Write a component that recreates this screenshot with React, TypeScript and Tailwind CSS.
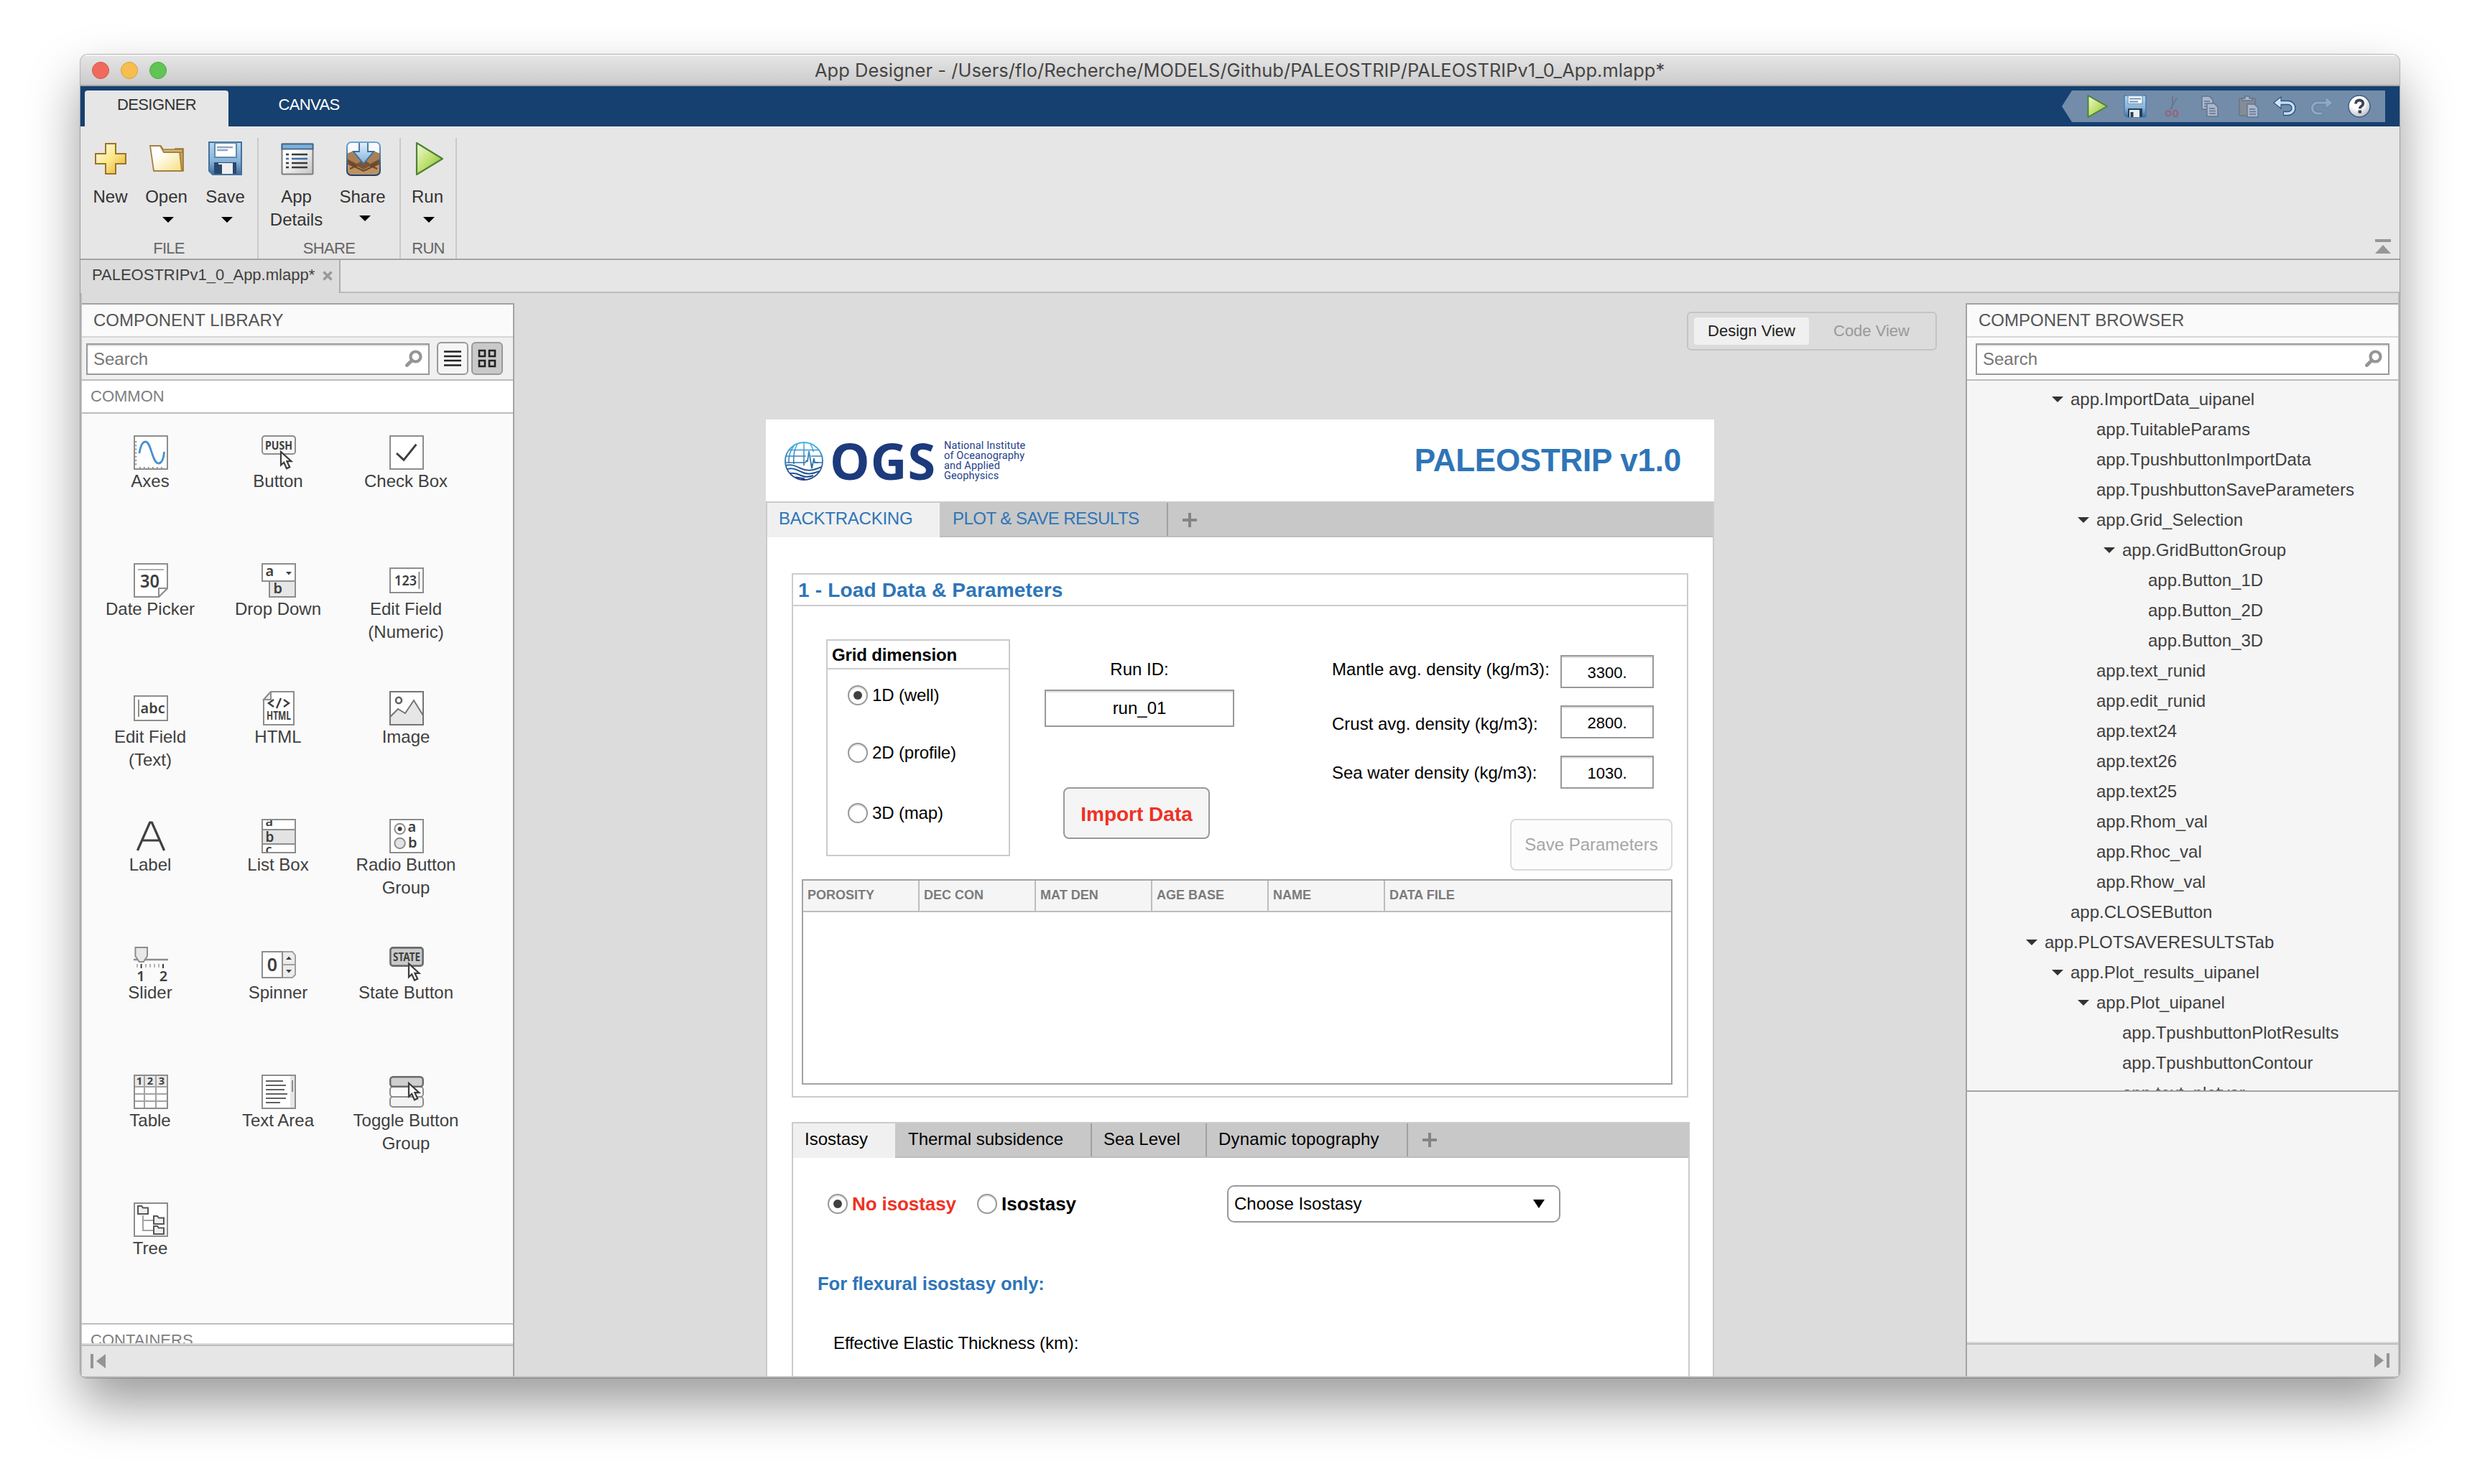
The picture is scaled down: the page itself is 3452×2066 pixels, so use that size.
import React from "react";

type IconProps = { className?: string };

/* ---------- toolstrip icons ---------- */

function Gradients() {
  return (
    <svg className="absolute h-0 w-0" aria-hidden="true">
      <defs>
        <linearGradient id="gold" x1="0" y1="0" x2="1" y2="1">
          <stop offset="0" stopColor="#fffdf0" />
          <stop offset="0.5" stopColor="#fbe88a" />
          <stop offset="1" stopColor="#e5a92c" />
        </linearGradient>
        <linearGradient id="paper" x1="0" y1="0" x2="1" y2="1">
          <stop offset="0.3" stopColor="#ffffff" />
          <stop offset="1" stopColor="#f6e07f" />
        </linearGradient>
        <linearGradient id="steel" x1="0" y1="0" x2="0" y2="1">
          <stop offset="0" stopColor="#b4d9f0" />
          <stop offset="0.6" stopColor="#86b1d6" />
          <stop offset="1" stopColor="#3f6a97" />
        </linearGradient>
        <linearGradient id="go" x1="0" y1="0" x2="1" y2="1">
          <stop offset="0" stopColor="#f2f9e0" />
          <stop offset="0.5" stopColor="#c0e070" />
          <stop offset="1" stopColor="#7fb53a" />
        </linearGradient>
        <linearGradient id="sheet" x1="0" y1="0" x2="1" y2="1">
          <stop offset="0.3" stopColor="#ffffff" />
          <stop offset="1" stopColor="#c4c4c4" />
        </linearGradient>
        <linearGradient id="ice" x1="0" y1="0" x2="0" y2="1">
          <stop offset="0" stopColor="#e4f2fb" />
          <stop offset="1" stopColor="#7fb0d8" />
        </linearGradient>
        <linearGradient id="frame" x1="0" y1="0" x2="0" y2="1">
          <stop offset="0" stopColor="#6aa5d3" />
          <stop offset="1" stopColor="#1f3f66" />
        </linearGradient>
        <linearGradient id="sea" x1="0" y1="0" x2="0" y2="54" gradientUnits="userSpaceOnUse">
          <stop offset="0" stopColor="#45b5e6" />
          <stop offset="1" stopColor="#1c3a7c" />
        </linearGradient>
        <radialGradient id="ball" cx="0.4" cy="0.3" r="0.8">
          <stop offset="0.4" stopColor="#ffffff" />
          <stop offset="1" stopColor="#a8b0b8" />
        </radialGradient>
      </defs>
    </svg>
  );
}

const NewIcon = () => (
  <svg viewBox="0 0 48 48" className="size-12">
    <path d="M17 3h14v14h14v14H31v14H17V31H3V17h14z" fill="url(#gold)" stroke="#9c7426" strokeWidth="2" />
  </svg>
);

const OpenIcon = () => (
  <svg viewBox="0 0 48 48" className="size-12">
    <path d="M36 10h11v31H42z" fill="#c9a25c" stroke="#94702f" strokeWidth="1.6" />
    <path d="M1 6h15l3 5h27v4H20z" fill="#d8b777" stroke="#a07c3a" strokeWidth="1.6" />
    <path d="M1 6h14l5 9h22l3 26H6z" fill="url(#paper)" stroke="#a6803f" strokeWidth="1.8" />
  </svg>
);

const SaveIcon = ({ className = "size-12" }: IconProps) => (
  <svg viewBox="0 0 48 48" className={className}>
    <path d="M1 1h45v45H6l-5-5z" fill="url(#steel)" stroke="#44709c" strokeWidth="2" />
    <path d="M9 2h30v20H9z" fill="#ffffff" stroke="#5f88b0" strokeWidth="2" />
    <path d="M12 8h22M12 12h15" stroke="#8fa6c6" strokeWidth="2.4" />
    <path d="M8 29h31v16H8z" fill="#28486f" />
    <path d="M14 30h20v15H14z" fill="#efefef" />
    <path d="M14 32h5v13h-5z" fill="#28486f" />
  </svg>
);

const DetailsIcon = () => (
  <svg viewBox="0 0 48 48" className="size-12 translate-x-px">
    <rect x="2.5" y="3.5" width="43" height="42" rx="1" fill="url(#sheet)" stroke="#7d7d7d" strokeWidth="2" />
    <rect x="2.5" y="3.5" width="43" height="7" fill="#7fb0d8" stroke="#3d648c" strokeWidth="1.8" />
    <path d="M16 18h22M16 30h22M16 36h22" stroke="#3a3a3a" strokeWidth="2.4" />
    <path d="M16 24h22" stroke="#3d6ea5" strokeWidth="2.4" />
    <path d="M8 18h4M8 30h4M8 36h4" stroke="#3a3a3a" strokeWidth="2.6" />
    <path d="M8 24h4" stroke="#3d6ea5" strokeWidth="2.6" />
  </svg>
);

const ShareIcon = () => (
  <svg viewBox="0 0 48 48" className="size-12 translate-x-px">
    <rect x="1" y="1" width="46" height="46" rx="6" fill="#f8fafc" />
    <path d="M1 17l10-4h26l10 4v24a6 6 0 0 1-6 6H7a6 6 0 0 1-6-6z" fill="#7b5534" />
    <path d="M1 17l10-4 13 12-9 6L1 24zM47 17l-10-4-13 12 9 6 14-7z" fill="#a97f55" />
    <path d="M1 27l23 12 23-12v14a6 6 0 0 1-6 6H7a6 6 0 0 1-6-6z" fill="#bd9263" />
    <path d="M1 27l13 7-9 4M47 27l-13 7 9 4M1 30l23 11 23-11" fill="none" stroke="#6a4627" strokeWidth="2" />
    <path d="M18 1h12v13h8L24 31 10 14h8z" fill="url(#ice)" stroke="#3a6ea3" strokeWidth="1.8" />
    <rect x="1" y="1" width="46" height="46" rx="6" fill="none" stroke="url(#frame)" strokeWidth="2" />
  </svg>
);

const RunIcon = ({ className = "size-12" }: IconProps) => (
  <svg viewBox="0 0 48 48" className={className}>
    <path d="M7 2v44L43 24z" fill="url(#go)" stroke="#4b8433" strokeWidth="2.2" strokeLinejoin="round" />
  </svg>
);

/* ---------- quick access icons (32px) ---------- */

const QuickRunIcon = () => (
  <svg viewBox="0 0 32 32" className="size-8">
    <path d="M2.500 1v30L29 16z" fill="url(#go)" stroke="#4b8433" strokeWidth="2" strokeLinejoin="round" />
  </svg>
);

const QuickSaveIcon = () => (
  <svg viewBox="0 0 32 32" className="size-8">
    <path d="M1 1h30v30H4l-3-3z" fill="url(#steel)" stroke="#4a7db0" strokeWidth="1.600" />
    <path d="M6 1.500h20v11H6z" fill="#fff" stroke="#7fa3c4" strokeWidth="1.500" />
    <path d="M8 5.500h16M8 9.500h12" stroke="#6f93b8" strokeWidth="2" />
    <path d="M6 19h20v12H6z" fill="#22405f" />
    <path d="M8 21h14v10H8z" fill="#ececec" />
    <path d="M9.500 24h4v7h-4z" fill="#22405f" />
  </svg>
);

const CutIcon = () => (
  <svg viewBox="0 0 32 32" className="size-8" fill="none">
    <path d="M16 2v10l-1 8M22 4L13 20" stroke="#68778f" strokeWidth="1.8" />
    <ellipse cx="10" cy="26" rx="3.300" ry="3.600" stroke="#95647e" strokeWidth="2.4" />
    <ellipse cx="20" cy="26" rx="3" ry="4.4" stroke="#95647e" strokeWidth="2.4" />
  </svg>
);

const Sheet = ({ x, y }: { x: number; y: number }) => (
  <g transform={`translate(${x} ${y})`}>
    <path d="M0 0h10l5 5v13H0z" fill="#a9b7cb" stroke="#63738d" strokeWidth="1.4" />
    <path d="M3 7h8M3 10.500h9M3 14h9" stroke="#63738d" strokeWidth="1.5" />
  </g>
);

const CopyIcon = () => (
  <svg viewBox="0 0 32 32" className="size-8">
    <Sheet x={5} y={2} />
    <Sheet x={12} y={12} />
  </svg>
);

const PasteIcon = () => (
  <svg viewBox="0 0 32 32" className="size-8">
    <rect x="5" y="5" width="22" height="24" rx="1.500" fill="#858c96" stroke="#6b7484" strokeWidth="1.500" />
    <path d="M9 8V5h4V2h6v3h4v3z" fill="#a9b7cb" stroke="#63738d" strokeWidth="1.4" />
    <Sheet x={16} y={13} />
  </svg>
);

const UndoIcon = () => (
  <svg viewBox="0 0 32 32" className="size-8" fill="none">
    <path d="M7 11h14a7 7 0 0 1 0 15h-7" stroke="#2c5484" strokeWidth="6.400" />
    <path d="M1 11l10-8v16z" fill="#d6ebf9" stroke="#2c5484" strokeWidth="1.200" />
    <path d="M7 11h14a7 7 0 0 1 0 15h-6" stroke="#c5e0f3" strokeWidth="3.600" />
  </svg>
);

const RedoIcon = () => (
  <svg viewBox="0 0 32 32" className="size-8" fill="none">
    <path d="M24 11H10a7 7 0 0 0 0 15h7" stroke="#6683a6" strokeWidth="6" />
    <path d="M31 11L21 3v16z" fill="#8fa9c4" stroke="#6683a6" strokeWidth="1" />
    <path d="M24 11H10a7 7 0 0 0 0 15h6" stroke="#8fa9c4" strokeWidth="3.200" />
  </svg>
);

const HelpIcon = () => (
  <svg viewBox="0 0 32 32" className="size-8">
    <circle cx="16" cy="16" r="15" fill="url(#ball)" stroke="#3d5a80" strokeWidth="1.400" />
    <path
      d="M11 12.500c0-3.300 2.200-5 5.200-5s5.100 1.700 5.100 4.400c0 4-4.500 3.600-4.500 7.400"
      fill="none"
      stroke="#3b4252"
      strokeWidth="3.800"
    />
    <rect x="14.600" y="21.500" width="4.400" height="4.200" fill="#3b4252" />
  </svg>
);

const Caret = ({ className = "" }: IconProps) => (
  <svg viewBox="0 0 16 8" className={`h-2 w-4 ${className}`}>
    <path d="M0 0h16L8 8z" fill="currentColor" />
  </svg>
);

const SearchIcon = () => (
  <svg viewBox="0 0 24 24" className="size-6">
    <circle cx="14.500" cy="9.500" r="7" fill="none" stroke="#959595" strokeWidth="4.200" />
    <path d="M9 15L2.500 21.500" stroke="#959595" strokeWidth="4.800" strokeLinecap="round" />
  </svg>
);

const PlusIcon = () => (
  <svg viewBox="0 0 20 20" className="size-5">
    <path d="M0 10h20M10 0v20" stroke="#858585" strokeWidth="4" />
  </svg>
);

const Cursor = ({ x, y }: { x: number; y: number }) => (
  <path
    transform={`translate(${x} ${y})`}
    d="M0 0v9.300l2.100-1.900 1.900 4.200 2.100-1-1.900-4h3z"
    fill="#fff"
    stroke="#3c3c3c"
    strokeWidth="1.100"
  />
);

/* ---------- component library icons on a 24 unit grid ---------- */

const Tile = ({ children }: { children: React.ReactNode }) => (
  <svg
    viewBox="0 0 24 24"
    className="size-12 overflow-hidden"
    fill="none"
    fontFamily="Noto Sans, Open Sans, sans-serif"
    fontWeight="600"
  >
    {children}
  </svg>
);

const G = "#8d8d8d";
const D = "#3f3f3f";
const Box = () => <rect x="0.5" y="0.5" width="23" height="23" fill="#fff" stroke={G} />;

const AxesIcon = () => (
  <Tile>
    <Box />
    <path d="M1.600 4v17" stroke={G} strokeDasharray="1 1.600" />
    <path d="M4 22.500h17" stroke={G} strokeDasharray="0.8 2.200" />
    <path d="M4 12.500C5 6 6.500 4.500 8.300 4.500c4 0 4.500 15 9 15 2.200 0 3.500-3 4-8" stroke="#4a90cf" strokeWidth="1.400" />
  </Tile>
);
const ButtonIcon = () => (
  <Tile>
    <rect x="0.5" y="0.5" width="23" height="12.500" rx="1.800" fill="#f7f7f7" stroke={G} />
    <text x="12" y="9.800" fontSize="7.600" textAnchor="middle" fill={D} fontWeight="700" textLength="19" lengthAdjust="spacingAndGlyphs">PUSH</text>
    <Cursor x={13.500} y={11.500} />
  </Tile>
);
const CheckIcon = () => (
  <Tile>
    <Box />
    <path d="M5 12.500l5 4.700L18.700 6.300" stroke={D} strokeWidth="1.500" />
  </Tile>
);
const DateIcon = () => (
  <Tile>
    <path d="M0.500 0.500h23V17.500l-6 6H0.500z" fill="#fff" stroke={G} />
    <path d="M3 4.500h18" stroke="#b0b0b0" />
    <text x="11.200" y="17" fontSize="12.500" textAnchor="middle" fill={D} textLength="13.500" lengthAdjust="spacingAndGlyphs">30</text>
    <path d="M17.500 23.500v-6h6z" fill="#fff" stroke={G} />
  </Tile>
);
const DropIcon = () => (
  <Tile>
    <rect x="5.500" y="12.500" width="18" height="11" fill="#e6e6e6" stroke={G} />
    <rect x="0.500" y="0.500" width="23" height="12" fill="#fff" stroke={G} />
    <text x="2.800" y="9" fontSize="10" fill={D}>a</text>
    <text x="8.300" y="21" fontSize="10" fill={D}>b</text>
    <path d="M17 6h4l-2 2.200z" fill={D} />
  </Tile>
);
const NumericIcon = () => (
  <Tile>
    <rect x="0.500" y="3.500" width="23" height="17" fill="#fff" stroke={G} />
    <text x="11.300" y="15.500" fontSize="10" textAnchor="middle" fill={D} textLength="15.500" lengthAdjust="spacingAndGlyphs">123</text>
    <path d="M20.700 6v12" stroke={G} />
  </Tile>
);
const TextFieldIcon = () => (
  <Tile>
    <rect x="0.500" y="3.500" width="23" height="17" fill="#fff" stroke={G} />
    <text x="13.300" y="15.300" fontSize="10" textAnchor="middle" fill={D} textLength="17" lengthAdjust="spacingAndGlyphs">abc</text>
    <path d="M3.500 6v12" stroke={G} />
  </Tile>
);
const HtmlIcon = () => (
  <Tile>
    <path d="M6.500 0.500h16v23h-21V6z" fill="#fff" stroke={G} />
    <path d="M6.500 0.500V6h-5z" fill="#eee" stroke={G} />
    <path d="M8.500 6L5 8.500 8.500 11M15.500 6L19 8.500 15.500 11M13.500 5l-3 7" stroke={D} strokeWidth="1.200" />
    <text x="12" y="20.200" fontSize="7.600" textAnchor="middle" fill={D} fontWeight="700" textLength="17" lengthAdjust="spacingAndGlyphs">HTML</text>
  </Tile>
);
const ImageIcon = () => (
  <Tile>
    <Box />
    <path d="M0.500 18L6 12.500 11 15.500 17 6.500l6.500 10.500v6.500H0.500z" fill="#e6e6e6" stroke="#747474" />
    <ellipse cx="6.500" cy="6.500" rx="2" ry="2.100" stroke="#606060" strokeWidth="1.300" />
    <rect x="0.500" y="0.500" width="23" height="23" stroke="#747474" />
  </Tile>
);
const LabelIcon = () => (
  <Tile>
    <path d="M2.700 22L11.300 2.500h1.400L21.300 22M6 15h12" stroke={D} strokeWidth="1.600" />
  </Tile>
);
const ListIcon = () => (
  <Tile>
    <Box />
    <text x="2.800" y="5.200" fontSize="9" fill={D}>a</text>
    <text x="2.800" y="24.500" fontSize="9" fill={D}>c</text>
    <rect x="0.500" y="7.500" width="23" height="10" fill="#e3e3e3" stroke={G} />
    <text x="2.700" y="15.900" fontSize="9.500" fill={D}>b</text>
    <rect x="0.500" y="0.500" width="23" height="23" stroke={G} />
  </Tile>
);
const RadioIcon = () => (
  <Tile>
    <Box />
    <circle cx="7.300" cy="7" r="3.600" fill="#fff" stroke={G} />
    <circle cx="7.300" cy="7" r="1.500" fill={D} />
    <circle cx="7.300" cy="17" r="3.600" fill="#e3e3e3" stroke={G} />
    <text x="12.800" y="9.200" fontSize="10" fill={D}>a</text>
    <text x="13" y="20" fontSize="10" fill={D}>b</text>
  </Tile>
);
const SliderIcon = () => (
  <Tile>
    <path d="M0 9h24" stroke={G} strokeWidth="1.300" />
    <path d="M1.200 0.500h8.300v6l-2.600 4h-3l-2.700-4z" fill="#e8e8e8" stroke={G} />
    <path d="M2.500 12v2.400M8.500 12v2.400M11.500 12v2.400M14.500 12v2.400M17.500 12v2.400" stroke="#a0a0a0" strokeWidth="0.800" />
    <path d="M5.300 12v3M20.500 12v3" stroke={D} />
    <text x="5" y="24" fontSize="10" textAnchor="middle" fill={D}>1</text>
    <text x="20.800" y="24" fontSize="10" textAnchor="middle" fill={D}>2</text>
  </Tile>
);
const SpinnerIcon = () => (
  <Tile>
    <path d="M14.500 3.500h7l2 2.500v13.500l-2 2h-7z" fill="#ececec" stroke="#a0a0a0" />
    <path d="M0.500 3.500h14v18h-14z" fill="#fff" stroke={G} />
    <path d="M14.500 12.500h9" stroke="#a0a0a0" />
    <text x="7.500" y="17" fontSize="12.500" textAnchor="middle" fill={D}>0</text>
    <path d="M17 9h4l-2-2.200zM17 16h4l-2 2.200z" fill={D} />
  </Tile>
);
const StateIcon = () => (
  <Tile>
    <rect x="0.700" y="0.700" width="22.600" height="12.600" rx="1.800" fill="#cacaca" stroke="#6a6a6a" strokeWidth="1.300" />
    <text x="12" y="10" fontSize="7.600" textAnchor="middle" fill={D} fontWeight="700" textLength="19" lengthAdjust="spacingAndGlyphs">STATE</text>
    <Cursor x={13.500} y={11.800} />
  </Tile>
);
const TableIcon = () => (
  <Tile>
    <Box />
    <rect x="1" y="1" width="22" height="7.500" fill="#e8e8e8" />
    <path d="M0.500 8.500h23M0.500 13.500h23M0.500 18.500h23M7.500 0.500v23M15.500 0.500v23" stroke="#a3a3a3" />
    <rect x="0.500" y="0.500" width="23" height="23" stroke={G} />
    <text x="4" y="7" fontSize="7.300" fontWeight="700" textAnchor="middle" fill={D}>1</text>
    <text x="11.500" y="7" fontSize="7.300" fontWeight="700" textAnchor="middle" fill={D}>2</text>
    <text x="19.500" y="7" fontSize="7.300" fontWeight="700" textAnchor="middle" fill={D}>3</text>
  </Tile>
);
const AreaIcon = () => (
  <Tile>
    <Box />
    <rect x="20" y="1" width="3" height="22" fill="#e6e6e6" />
    <path d="M21.500 4v8" stroke={G} />
    <path d="M3 4.500h12M3 7.500h14M3 10.500h13M3 13.500h15M3 16.500h14M3 19.500h10" stroke="#606060" />
  </Tile>
);
const ToggleIcon = () => (
  <Tile>
    <rect x="0.500" y="8.500" width="23" height="7" rx="2" fill="#fafafa" stroke={G} />
    <rect x="0.500" y="15.500" width="23" height="7" rx="2" fill="#f2f2f2" stroke={G} />
    <rect x="0.600" y="1.600" width="22.800" height="6.800" rx="2" fill="#cfcfcf" stroke="#6a6a6a" strokeWidth="1.200" />
    <Cursor x={13.500} y={6} />
  </Tile>
);
const Folder = ({ x, y }: { x: number; y: number }) => (
  <path transform={`translate(${x} ${y})`} d="M0 0h2.500l1 1.200H7V5.500H0z" fill="#eee" stroke="#555" />
);
const TreeIcon = () => (
  <Tile>
    <Box />
    <path d="M6.500 9v10.500h7M6.500 12.500h7" stroke="#a3a3a3" />
    <Folder x={3} y={2.500} />
    <Folder x={14} y={9.500} />
    <Folder x={14} y={16.500} />
  </Tile>
);

const library: { label: string; Icon: () => React.ReactElement }[] = [
  { label: "Axes", Icon: AxesIcon },
  { label: "Button", Icon: ButtonIcon },
  { label: "Check Box", Icon: CheckIcon },
  { label: "Date Picker", Icon: DateIcon },
  { label: "Drop Down", Icon: DropIcon },
  { label: "Edit Field (Numeric)", Icon: NumericIcon },
  { label: "Edit Field (Text)", Icon: TextFieldIcon },
  { label: "HTML", Icon: HtmlIcon },
  { label: "Image", Icon: ImageIcon },
  { label: "Label", Icon: LabelIcon },
  { label: "List Box", Icon: ListIcon },
  { label: "Radio Button Group", Icon: RadioIcon },
  { label: "Slider", Icon: SliderIcon },
  { label: "Spinner", Icon: SpinnerIcon },
  { label: "State Button", Icon: StateIcon },
  { label: "Table", Icon: TableIcon },
  { label: "Text Area", Icon: AreaIcon },
  { label: "Toggle Button Group", Icon: ToggleIcon },
  { label: "Tree", Icon: TreeIcon },
];

/* ---------- window chrome ---------- */

function TitleBar() {
  return (
    <div className="flex h-11 shrink-0 items-center border-b-2 border-[#a9a9a9] bg-linear-to-b from-[#e6e6e6] to-[#cbcbcb] shadow-[inset_0_2px_0_#f3f3f3]">
      <div className="ml-4 mt-0.5 flex gap-4">
        <span className="size-6 rounded-full border border-[#d9564c] bg-[#ee6a5f]" />
        <span className="size-6 rounded-full border border-[#dca13a] bg-[#f5be4f]" />
        <span className="size-6 rounded-full border border-[#4fa73f] bg-[#61c455]" />
      </div>
      <div className="ml-[902px] w-[1190px] whitespace-nowrap pt-[3px] font-['Inter'] text-[25.4px] tracking-[0.060px] text-[#444]">
        App Designer - /Users/flo/Recherche/MODELS/Github/PALEOSTRIP/PALEOSTRIPv1_0_App.mlapp*
      </div>
    </div>
  );
}

function RibbonTabs() {
  return (
    <div className="flex h-14 shrink-0 items-start bg-[#164070] pt-1.5 text-[22px] tracking-[-0.600px]">
      <div className="ml-1.5 flex h-[50px] w-[200px] justify-center rounded-t bg-[#e6e6e6] pt-1 leading-8 text-[#333]">
        DESIGNER
      </div>
      <div className="flex w-[224px] justify-center pt-1 leading-8 text-white">CANVAS</div>
      <div className="ml-auto mr-5 flex">
        <svg viewBox="0 0 14 44" className="h-11 w-3.5">
          <path d="M14 0v44L0 22z" fill="#738ca9" />
        </svg>
        <div className="flex h-11 w-[436px] items-center gap-5 bg-[#738ca9] pl-5">
          <QuickRunIcon />
          <QuickSaveIcon />
          <CutIcon />
          <CopyIcon />
          <PasteIcon />
          <UndoIcon />
          <RedoIcon />
          <HelpIcon />
        </div>
      </div>
    </div>
  );
}

function Tool({ width, icon, lines, caret }: { width: string; icon: React.ReactNode; lines: string[]; caret?: string }) {
  return (
    <div className={`flex flex-col items-center pt-[5px] text-2xl leading-8 text-[#333] ${width}`}>
      {icon}
      <div className="mr-px mt-[13px] text-center">
        {lines.map((l) => (
          <div key={l}>{l}</div>
        ))}
      </div>
      {caret && <Caret className={`text-black ${caret}`} />}
    </div>
  );
}

function Section({ title, width, children }: { title: string; width: string; children: React.ReactNode }) {
  return (
    <div className={`flex h-[168px] flex-col justify-between border-r-2 border-[#cacaca] ${width}`}>
      <div className="flex">{children}</div>
      <div className="mb-0.5 text-center text-[22px] leading-6 tracking-[-0.700px] text-[#666]">{title}</div>
    </div>
  );
}

function Ribbon() {
  return (
    <div className="flex h-[186px] shrink-0 border-b-2 border-[#a3a3a3] bg-[#e6e6e6] pt-4">
      <Section title="FILE" width="w-[248px]">
        <Tool width="ml-1 w-[76px]" icon={<NewIcon />} lines={["New"]} />
        <Tool width="w-[80px]" icon={<OpenIcon />} lines={["Open"]} caret="mt-3 translate-x-0.5" />
        <Tool width="w-[84px]" icon={<SaveIcon />} lines={["Save"]} caret="mt-3 translate-x-0.5" />
      </Section>
      <Section title="SHARE" width="w-[198px]">
        <Tool width="ml-2.5 w-[86px]" icon={<DetailsIcon />} lines={["App", "Details"]} />
        <Tool width="w-[98px]" icon={<ShareIcon />} lines={["Share"]} caret="mt-2.5 translate-x-[3px]" />
      </Section>
      <Section title="RUN" width="w-[78px]">
        <Tool width="w-[75px]" icon={<RunIcon className="size-12 translate-x-px" />} lines={["Run"]} caret="mt-3 translate-x-px" />
      </Section>
      <svg viewBox="0 0 22 22" className="mb-1.5 ml-auto mr-3 size-[22px] self-end">
        <path d="M0 1h22v4H0zM11 9l11 12H0z" fill="#969696" />
      </svg>
    </div>
  );
}

function DocumentTabs() {
  return (
    <div className="flex h-[46px] shrink-0">
      <div className="flex w-[362px] items-center border-r-2 border-[#adadad] bg-[#dcdcdc] pb-1.5 pl-4 text-[22px] text-[#404040]">
        PALEOSTRIPv1_0_App.mlapp*
        <svg viewBox="0 0 14 14" className="ml-auto mr-[9px] mt-1 size-3.5">
          <path d="M1.500 1.500l11 11M12.500 1.500l-11 11" stroke="#999" strokeWidth="3.500" />
        </svg>
      </div>
      <div className="flex-1 border-b-2 border-[#bdbdbd] bg-[#e6e6e6]" />
    </div>
  );
}

/* ---------- side panels ---------- */

function SearchBox({ width }: { width: string }) {
  return (
    <div className={`flex h-11 items-center justify-between border-2 border-[#999] bg-white pl-2 pr-2 text-2xl leading-8 text-[#767676] shadow-[inset_0_2px_0_#e0e0e0] ${width}`}>
      Search
      <span className="mb-0.5">
        <SearchIcon />
      </span>
    </div>
  );
}

function ComponentLibrary() {
  return (
    <aside className="flex w-[602px] shrink-0 flex-col border-r-2 border-t-2 border-[#a3a3a3] bg-[#fafafa]">
      <div className="h-[46px] shrink-0 border-b-2 border-[#d6d6d6] pl-4 text-2xl leading-[43px] text-[#555]">
        COMPONENT LIBRARY
      </div>
      <div className="flex h-[60px] shrink-0 items-start border-b-2 border-[#bdbdbd] bg-[#f0f0f0] pl-1.5 pt-2">
        <SearchBox width="w-[478px]" />
        <div className="-mt-0.5 ml-2.5 flex h-[46px] w-11 items-center justify-center rounded-md border-2 border-[#999] bg-[#f5f5f5]">
          <svg viewBox="0 0 24 22" className="h-[22px] w-6">
            <path d="M0 1.500h24M0 8h24M0 14h24M0 20.500h24" stroke="#222" strokeWidth="2.400" />
          </svg>
        </div>
        <div className="-mt-0.5 ml-1 flex h-[46px] w-11 items-center justify-center rounded-md border-2 border-[#999] bg-[#c9c9c9]">
          <svg viewBox="0 0 26 26" className="size-[26px]">
            <path d="M2 2h8v8H2zM16 2h8v8h-8zM2 16h8v8H2zM16 16h8v8h-8z" fill="none" stroke="#222" strokeWidth="2.600" />
          </svg>
        </div>
      </div>
      <div className="h-[46px] shrink-0 border-b-2 border-[#bdbdbd] bg-white pl-3 text-[22px] leading-[44px] text-[#808080]">
        COMMON
      </div>
      <div className="grid h-[1266px] shrink-0 auto-rows-[178px] grid-cols-[178px_178px_178px] content-start pl-[7px] pt-[30px]">
        {library.map(({ label, Icon }) => (
          <div key={label} className="flex flex-col items-center text-2xl leading-8 text-[#3f3f3f]">
            <Icon />
            <div className="mr-0.5 w-[150px] text-center">{label}</div>
          </div>
        ))}
      </div>
      <div className="h-[28px] shrink-0 overflow-hidden border-t-2 border-[#bdbdbd] bg-white pl-3 text-[22px] leading-[44px] text-[#808080]">
        CONTAINERS
      </div>
      <PanelFooter side="left" />
    </aside>
  );
}

function PanelFooter({ side }: { side: "left" | "right" }) {
  return (
    <div className="flex min-h-0 flex-1 flex-col border-t-2 border-[#dadada]">
      <div className={`flex flex-1 items-center border-t-2 border-[#bdbdbd] bg-[#e6e6e6] px-3 ${side === "right" ? "justify-end" : ""}`}>
        <svg viewBox="0 0 21 20" className={`h-5 w-[21px] ${side === "right" ? "-scale-x-100" : ""}`}>
          <path d="M0 0h4v20H0zM21 0v20L8 10z" fill="#949494" />
        </svg>
      </div>
    </div>
  );
}

const tree: { name: string; pad: string; open?: boolean }[] = [
  { name: "app.ImportData_uipanel", pad: "pl-[118px]", open: true },
  { name: "app.TuitableParams", pad: "pl-[154px]" },
  { name: "app.TpushbuttonImportData", pad: "pl-[154px]" },
  { name: "app.TpushbuttonSaveParameters", pad: "pl-[154px]" },
  { name: "app.Grid_Selection", pad: "pl-[154px]", open: true },
  { name: "app.GridButtonGroup", pad: "pl-[190px]", open: true },
  { name: "app.Button_1D", pad: "pl-[226px]" },
  { name: "app.Button_2D", pad: "pl-[226px]" },
  { name: "app.Button_3D", pad: "pl-[226px]" },
  { name: "app.text_runid", pad: "pl-[154px]" },
  { name: "app.edit_runid", pad: "pl-[154px]" },
  { name: "app.text24", pad: "pl-[154px]" },
  { name: "app.text26", pad: "pl-[154px]" },
  { name: "app.text25", pad: "pl-[154px]" },
  { name: "app.Rhom_val", pad: "pl-[154px]" },
  { name: "app.Rhoc_val", pad: "pl-[154px]" },
  { name: "app.Rhow_val", pad: "pl-[154px]" },
  { name: "app.CLOSEButton", pad: "pl-[118px]" },
  { name: "app.PLOTSAVERESULTSTab", pad: "pl-[82px]", open: true },
  { name: "app.Plot_results_uipanel", pad: "pl-[118px]", open: true },
  { name: "app.Plot_uipanel", pad: "pl-[154px]", open: true },
  { name: "app.TpushbuttonPlotResults", pad: "pl-[190px]" },
  { name: "app.TpushbuttonContour", pad: "pl-[190px]" },
  { name: "app.text_plotvar", pad: "pl-[190px]" },
];

function ComponentBrowser() {
  return (
    <aside className="flex w-[602px] shrink-0 flex-col border-l-2 border-t-2 border-[#a3a3a3] bg-[#fafafa]">
      <div className="h-[46px] shrink-0 border-b-2 border-[#d6d6d6] pl-4 text-2xl leading-[43px] text-[#555]">
        COMPONENT BROWSER
      </div>
      <div className="h-[60px] shrink-0 border-b-2 border-[#bdbdbd] pl-3 pt-2">
        <SearchBox width="w-[576px]" />
      </div>
      <div className="h-[990px] shrink-0 overflow-hidden border-b-2 border-[#a3a3a3] bg-[#f5f5f5] pt-[5px]">
        {tree.map(({ name, pad, open }) => (
          <div key={name} className={`flex h-[42px] items-center text-2xl leading-[42px] text-[#3f3f3f] ${pad}`}>
            <span className="flex w-[26px] shrink-0">{open && <Caret className="text-[#333]" />}</span>
            <span>{name}</span>
          </div>
        ))}
      </div>
      <div className="h-[348px] shrink-0 bg-[#f5f5f5]" />
      <PanelFooter side="right" />
    </aside>
  );
}

/* ---------- design canvas ---------- */

function OgsLogo() {
  return (
    <div className="ml-[26px] mt-[31px] flex items-start">
      <svg viewBox="0 0 54 54" className="size-[54px]" fill="none" stroke="url(#sea)" strokeWidth="1.500">
        <circle cx="27" cy="27" r="26" strokeWidth="1.800" />
        <path d="M6 11.500h42M2 20h28M36.500 20h15M1 29h29M42 29h11" />
        <path d="M27 1.200v32M18 3C13 11 12 20 13 31M36 3c2 3.500 3.500 7 4.300 11M13 6C7 13 5.500 22 6 30" />
        <path d="M29 27h3l2-14 4 24 3-14 1 6h5" strokeWidth="1.800" />
        <path d="M1.500 33c9-2 15 1 21 4s13 5 29-2M3.500 38c9-2 14 1 20 4s12 4 25-1M8 44c7-1 11 1 15 3s9 3 17 0M15 49.500c5 0 9 2 13 2" strokeWidth="2" />
      </svg>
      <div className="ml-[9px] w-[146px] whitespace-nowrap font-['Open_Sans'] text-[70px] font-bold leading-[52px] tracking-[1px] text-[#1c3a7c]">
        OGS
      </div>
      <div className="ml-[13px] mt-[-1px] whitespace-nowrap font-['Roboto'] text-[14.500px] leading-[14px] tracking-[0.150px] text-[#24418a]">
        National Institute
        <br />
        of Oceanography
        <br />
        and Applied
        <br />
        Geophysics
      </div>
    </div>
  );
}

function Radio({ checked, label, className }: { checked?: boolean; label: string; className?: string }) {
  return (
    <div className={`flex h-7 items-center gap-1.5 whitespace-nowrap ${className}`}>
      <span className="flex size-7 shrink-0 items-center justify-center rounded-full border-2 border-[#999] bg-white shadow-[inset_0_2px_0_#e4e4e4]">
        {checked && <span className="size-3 rounded-full bg-[#404040]" />}
      </span>
      <span>{label}</span>
    </div>
  );
}

function Density({ label, value, className }: { label: string; value: string; className: string }) {
  return (
    <div className="flex h-[46px] w-[448px] items-center">
      <div className={`w-[318px] whitespace-nowrap text-2xl ${className}`}>{label}</div>
      <div className="flex h-[46px] w-[130px] items-center justify-center border-2 border-[#999] bg-white pt-0.5 text-[22px] shadow-[inset_0_2px_0_#e0e0e0]">
        {value}
      </div>
    </div>
  );
}

function LoadPanel() {
  return (
    <section className="ml-[34px] mt-[50px] h-[730px] w-[1248px] shrink-0 border-2 border-[#cbcbcb]">
      <h2 className="h-11 border-b-2 border-[#cbcbcb] pl-[7px] text-[28px] font-bold leading-[43px] tracking-[0.170px] text-[#2e75b8]">
        1 - Load Data &amp; Parameters
      </h2>
      <div className="flex h-[380px] items-start">
        <div className="ml-[46px] mt-[46px] h-[302px] w-64 border-2 border-[#cbcbcb]">
          <div className="h-10 border-b-2 border-[#cbcbcb] pl-1.5 text-2xl font-bold leading-[39px] tracking-[-0.150px]">Grid dimension</div>
          <div className="pl-7 pt-[22px] text-2xl tracking-[-0.150px]">
            <Radio checked label="1D (well)" />
            <Radio label="2D (profile)" className="mt-[52px]" />
            <Radio label="3D (map)" className="mt-[56px]" />
          </div>
        </div>
        <div className="ml-12 mt-[72px] w-[264px] text-center text-2xl leading-8">
          <div>Run ID:</div>
          <div className="mt-3 h-[52px] border-2 border-[#999] leading-[48px] shadow-[inset_0_2px_0_#e0e0e0]">run_01</div>
          <div className="ml-[26px] mt-[84px] flex h-[72px] w-[204px] items-center justify-center rounded-lg border-2 border-[#999] bg-[#f5f5f5] pt-[3px] text-[28px] font-bold text-[#ee3224]">
            Import Data
          </div>
        </div>
        <div className="ml-[136px] mt-[68px] flex flex-col gap-6">
          <Density label="Mantle avg. density (kg/m3):" value="3300." className="pb-[7px] tracking-[0.050px]" />
          <Density label="Crust avg. density (kg/m3):" value="2800." className="pt-1.5" />
          <Density label="Sea water density (kg/m3):" value="1030." className="pt-0.5" />
          <div className="ml-[248px] mt-[18px] flex h-[72px] w-[226px] items-center justify-center rounded-lg border-2 border-[#dadada] bg-[#fcfcfc] text-2xl text-[#a6a6a6]">
            Save Parameters
          </div>
        </div>
      </div>
      <div className="ml-3 h-[286px] w-[1212px] border-2 border-[#a3a3a3] bg-white">
        <div className="flex h-11 border-b-2 border-[#bdbdbd] bg-[#f5f5f5] text-lg font-bold leading-[40px] text-[#7b7b7b]">
          {["POROSITY", "DEC CON", "MAT DEN", "AGE BASE", "NAME"].map((h) => (
            <div key={h} className="w-[162px] border-r-2 border-[#bdbdbd] pl-1.5">
              {h}
            </div>
          ))}
          <div className="pl-1.5">DATA FILE</div>
        </div>
      </div>
    </section>
  );
}

function IsostasyTabs() {
  return (
    <section className="ml-[34px] mt-[34px] flex w-[1250px] flex-1 flex-col border-x-2 border-t-2 border-[#cbcbcb]">
      <div className="flex h-12 shrink-0 text-2xl leading-[44px]">
        <div className="w-[142px] bg-[#f0f0f0] pl-4">Isostasy</div>
        <div className="flex flex-1 border-b-2 border-[#bdbdbd] bg-[#c8c8c8]">
          <div className="w-[274px] border-r-2 border-[#a0a0a0] pl-[18px]">Thermal subsidence</div>
          <div className="w-[160px] border-r-2 border-[#a0a0a0] pl-4">Sea Level</div>
          <div className="w-[280px] border-r-2 border-[#a0a0a0] pl-4 tracking-[0.200px]">Dynamic topography</div>
          <div className="ml-5 mt-[13px]">
            <PlusIcon />
          </div>
        </div>
      </div>
      <div className="flex h-[90px] items-start">
        <Radio checked label="No isostasy" className="ml-12 mt-[50px] w-[208px] text-[26px] font-bold tracking-[-0.100px] [&>span:last-child]:text-[#ee3224]" />
        <Radio label="Isostasy" className="mt-[50px] w-[348px] text-[26px] font-bold" />
        <div className="mt-[38px] flex h-[52px] w-[464px] items-center justify-between rounded-[10px] border-2 border-[#999] bg-white pl-2 pr-5 text-2xl">
          Choose Isostasy
          <svg viewBox="0 0 16 12" className="h-3 w-4">
            <path d="M0 0h16L8 12z" fill="#000" />
          </svg>
        </div>
      </div>
      <div className="ml-[34px] mt-[69px] text-[25.600px] font-bold leading-8 tracking-[-0.050px] text-[#2e75b8]">For flexural isostasy only:</div>
      <div className="ml-14 mt-[51px] text-2xl leading-8 tracking-[-0.100px]">Effective Elastic Thickness (km):</div>
    </section>
  );
}

function Canvas() {
  return (
    <div className="ml-[350px] mt-24 flex w-[1320px] flex-1 flex-col overflow-hidden bg-white text-black">
      <header className="flex h-[114px] shrink-0 items-start justify-between">
        <OgsLogo />
        <h1 className="mr-[46px] mt-[29px] whitespace-nowrap text-[44px] font-bold leading-[56px] tracking-[-0.250px] text-[#2e75b8]">PALEOSTRIP v1.0</h1>
      </header>
      <div className="flex flex-1 flex-col border-x-2 border-t-2 border-[#cbcbcb]">
        <div className="flex h-12 shrink-0 text-2xl leading-[43px] text-[#2e75b8]">
          <div className="w-[240px] bg-[#f0f0f0] pl-4 tracking-[-0.250px]">BACKTRACKING</div>
          <div className="flex flex-1 border-b-2 border-[#bdbdbd] bg-[#c8c8c8]">
            <div className="w-[318px] border-r-2 border-[#a0a0a0] pl-[18px] tracking-[-0.520px]">PLOT &amp; SAVE RESULTS</div>
            <div className="ml-5 mt-[14px]">
              <PlusIcon />
            </div>
          </div>
        </div>
        <LoadPanel />
        <IsostasyTabs />
      </div>
    </div>
  );
}

export default function App() {
  return (
    <div className="h-[2066px] w-[3452px] overflow-hidden bg-white pl-[112px] pt-[76px] font-['Liberation_Sans',Arial,sans-serif]">
      <Gradients />
      <div className="flex h-[1842px] w-[3228px] flex-col overflow-hidden rounded-t-[10px] rounded-b-[8px] bg-[#dcdcdc] shadow-[0_0_0_1px_rgba(0,0,0,0.25),0_36px_72px_rgba(0,0,0,0.4)]">
        <TitleBar />
        <RibbonTabs />
        <Ribbon />
        <DocumentTabs />
        <div className="flex min-h-0 flex-1 border-x-2 border-b-2 border-[#bdbdbd] pt-3.5">
          <ComponentLibrary />
          <main className="flex min-w-0 flex-1 flex-col">
            <div className="ml-auto mr-10 mt-3 flex h-[54px] w-[348px] shrink-0 items-center rounded-md border-2 border-[#c4c4c4] pb-px text-[22px]">
              <div className="ml-2 h-[38px] w-[160px] rounded bg-[#f0f0f0] text-center leading-[38px] text-[#222]">Design View</div>
              <div className="w-[174px] text-center leading-[38px] text-[#999]">Code View</div>
            </div>
            <Canvas />
          </main>
          <ComponentBrowser />
        </div>
      </div>
    </div>
  );
}
